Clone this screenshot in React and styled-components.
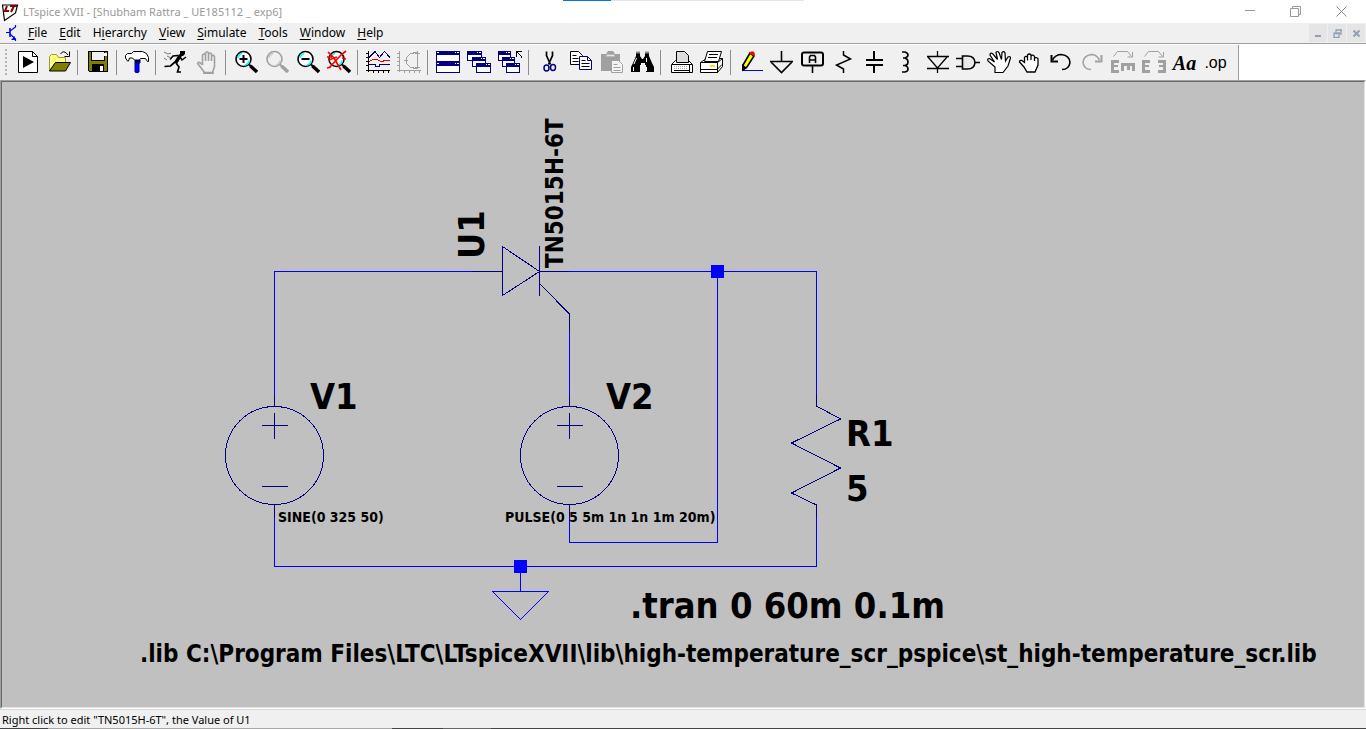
import React from "react";
import styled, { createGlobalStyle } from "styled-components";

const GlobalStyle = createGlobalStyle`
  * { box-sizing: border-box; }
  body { margin: 0; background: #f0f0f0; }
  button { font: inherit; color: inherit; }
`;

const uiFont = `"Noto Sans", "Open Sans", sans-serif`;
const schematicFont = `"DejaVu Sans Condensed", "DejaVu Sans", sans-serif`;

const Window = styled.div`
  display: flex;
  flex-direction: column;
  min-height: 100vh;
  position: relative;
  font-family: ${uiFont};
  font-size: 12px;
  color: #000;
  background: #f0f0f0;
`;

const LoadBar = styled.div`
  position: absolute;
  top: 0;
  left: 563px;
  width: 241px;
  height: 1px;
  background: linear-gradient(to right, #0078d7 48px, #e5e5e5 48px);
`;

const TitleBar = styled.header`
  display: flex;
  align-items: center;
  height: 23px;
  padding-left: 1px;
  background: #fff;
  color: #999;
`;

const Title = styled.h1`
  flex: 1;
  margin: 0 0 0 4px;
  font-size: 11px;
  font-weight: 400;
  line-height: 22px;
  white-space: nowrap;
`;

const CaptionButton = styled.button`
  display: flex;
  align-items: center;
  justify-content: center;
  width: 46px;
  height: 22px;
  padding: 0;
  border: 0;
  background: transparent;
`;

const CaptionGroup = styled.div`
  display: flex;
  padding-right: 2px;
`;

const MenuBar = styled.nav`
  display: flex;
  align-items: center;
  height: 20px;
  padding: 0 1px 0 5px;
`;

const MenuList = styled.ul`
  display: flex;
  flex: 1;
  margin: 0 0 0 3px;
  padding: 0;
  list-style: none;
`;

const MenuButton = styled.button`
  padding: 0 6px;
  border: 0;
  background: transparent;
  font-size: 12px;
  line-height: 20px;
  u {
    text-underline-offset: 2px;
    text-decoration-skip-ink: none;
  }
`;

const ChildButtons = styled.div`
  display: flex;
  gap: 1px;
`;

const ChildButton = styled.button`
  display: flex;
  align-items: center;
  justify-content: center;
  width: 18px;
  height: 18px;
  padding: 0;
  border: 0;
  background: #e5e5e5;
`;

const ToolRow = styled.div`
  display: flex;
  border-top: 1px solid #a0a0a0;
  background: #fff;
`;

const Toolbar = styled.div`
  display: flex;
  align-items: center;
  height: 35px;
  margin-top: 1px;
  padding-right: 7px;
  border-right: 1px solid #a0a0a0;
  background: #f0f0f0;
`;

const Grip = styled.div`
  width: 2px;
  height: 28px;
  margin: 0 5px;
  background: repeating-linear-gradient(#b4b4b4 0 2px, #f0f0f0 2px 4px);
`;

const Separator = styled.div`
  width: 8px;
  height: 25px;
  padding-left: 3px;
  &::before {
    content: "";
    display: block;
    width: 1px;
    height: 25px;
    background: #8d8d8d;
  }
`;

const ToolButton = styled.button`
  display: flex;
  align-items: center;
  justify-content: center;
  width: 31px;
  height: 35px;
  padding: 0;
  border: 0;
  background: transparent;
  svg { display: block; }
`;

const TextGlyph = styled.span`
  font-family: ${(p) => (p.$serif ? `"Liberation Serif", serif` : `"Liberation Sans", sans-serif`)};
  font-size: ${(p) => (p.$serif ? 20 : 16)}px;
  font-style: ${(p) => (p.$serif ? "italic" : "normal")};
  font-weight: ${(p) => (p.$serif ? 700 : 400)};
  line-height: 24px;
`;

const Canvas = styled.main`
  display: flex;
  flex: 1;
  min-height: 560px;
  border-style: solid;
  border-width: 1px;
  border-color: #a0a0a0 #fff #fff #a0a0a0;
  background: #c0c0c0;
`;

const CanvasInner = styled.div`
  display: flex;
  flex: 1;
  border-style: solid;
  border-width: 1px;
  border-color: #696969 #e3e3e3 #e3e3e3 #696969;
`;

const Schematic = styled.svg`
  flex: 1;
  display: block;
  min-width: 0;
  overflow: hidden;
  .wire { fill: none; stroke: #0000ff; }
  .part { fill: none; stroke: #000080; }
  .node { fill: #0000ff; }
`;

const Label = styled.text`
  font-family: ${schematicFont};
  font-weight: 700;
  font-size: ${(p) => p.$size}px;
  fill: #000;
`;

const StatusBar = styled.footer`
  border-top: 1px solid #d7d7d7;
  padding: 0 2px;
  font-size: 11px;
  line-height: 19px;
  height: 19px;
`;

const TaskbarEdge = styled.div`
  height: 1px;
  background: linear-gradient(
    to right,
    #444 48px, #a8a8a8 48px, #a8a8a8 392px, #444 392px, #444 443px,
    #666 443px, #666 491px, #444 491px
  );
`;

const K = "#000";
const G = "#a0a0a0";
const N = "#000080";

const Icon = ({ crisp, children }) => (
  <svg width="25" height="25" viewBox="0 0 25 25" fill="none" stroke={K}
    shapeRendering={crisp ? "crispEdges" : "auto"} aria-hidden="true">
    {children}
  </svg>
);

const Lens = ({ color = K, tint = "#0ff", body = "#fff" }) => (
  <>
    <circle cx="10.5" cy="9" r="7.5" fill={body} stroke={color} strokeWidth="1.6" />
    <path d="M5 8q1-4 4-4.500M12 15q4-1 4-4.500" stroke={tint} strokeWidth="1.600" />
    <path d="M16 14.500l2 2" stroke={color} strokeWidth="2" />
    <path d="M17.500 16l6.500 6" stroke={color} strokeWidth="3.400" />
  </>
);

const MiniWindow = ({ x, y, w, h, t = 4, wide }) => (
  <>
    <rect x={x + 0.5} y={y + 0.5} width={w - 1} height={h - 1} fill="#fff" stroke={N} />
    <rect x={x} y={y} width={w} height={t} fill={N} stroke="none" />
    {wide && <path d={`M${x + 1} ${y + 1.5}h2`} stroke="#fff" />}
    <path d={`M${x + w - 5} ${y + 1.5}h1M${x + w - 3} ${y + 1.5}h2`} stroke="#fff" />
  </>
);

const TurnArrow = () => <path d="M3.500 6.500l4-5h10l4 5M22.500 2v5h-5" stroke={G} />;
const letterE = "M1 10h8v3h-5v2h4v2h-4v3h5v3h-8z";

const icons = {
  run: (
    <Icon>
      <path d="M3.500 1.500h14l5 5v16h-19z" fill="#fff" />
      <path d="M17.500 1.500v5h5" />
      <path d="M8 6l11 6-11 6z" fill={K} stroke="none" />
    </Icon>
  ),
  open: (
    <Icon>
      <path d="M3.500 20.500v-14l2-2h5l2 3h7v5h-10z" fill="#ffff80" stroke="#9a9a30" />
      <path d="M9.500 12.500h15l-5 8.500h-16z" fill="#808000" />
      <path d="M14.500 4q3-5 7.500 1M23.500 1.500v5h-5" />
    </Icon>
  ),
  save: (
    <Icon crisp>
      <path d="M3.500 1.500h19v20h-18l-1-1z" fill="#808000" />
      <path d="M6.500 1.500h13v9h-13z" fill="#f0f0f0" />
      <path d="M19 3h3v3h-3z" fill="#fff" stroke="none" />
      <path d="M7 14h12v7h-12z" fill={K} stroke="none" />
      <path d="M15 16h3v5h-3z" fill="#fff" stroke="none" />
    </Icon>
  ),
  hammer: (
    <Icon>
      <path d="M11 10h5v3h-1v9q-2 1.500-4 0z" fill="#0000ff" stroke="#0000a0" />
      <path d="M11 10.500h5M11.500 12.500h3" strokeWidth="1.500" />
      <path d="M1.500 5.500l2-2h4l2-2h9l4 2 2 4v4h-1l-2-3h-5l-1 1.500h-5l-2-2h-3l-1 3h-1l-2-3z" fill="#fff" />
    </Icon>
  ),
  runner: (
    <Icon>
      <path d="M17 1h5v3l-2 2h-3z" fill={K} stroke="none" />
      <path d="M17.500 5l-5 8" strokeWidth="3.400" />
      <path d="M15 5.500l-5 .5-3 3.500M17 7l2 3 4-3" strokeWidth="1.500" />
      <path d="M12 12l-4.500 4-6 .500M13 13l3 4-1.500 5h3.500" strokeWidth="1.700" />
      <path d="M1 2l4 2 3-1M4 6l4 2M1 8l3 2" stroke="#777" />
    </Icon>
  ),
  halt: (
    <Icon>
      <path d="M8.500 15v-10q1.500-2 3 0v-2q1.500-2.500 3 0v1q1.500-2 3 0v2q2-1.500 3 .5v10l-2 6h-8l-3-4-4-5q1-2 3-.5l2 2M11.500 5v6M14.500 4v7M17.500 5v6M9 23.200h11" stroke={G} strokeWidth="1.600" />
    </Icon>
  ),
  zoomIn: <Icon><Lens /><path d="M10.500 5v8M6.500 9h8" strokeWidth="2" /></Icon>,
  zoomArea: <Icon><Lens color={G} tint="#c8c8c8" body="#f0f0f0" /></Icon>,
  zoomOut: <Icon><Lens /><path d="M6.500 9h8" strokeWidth="2" /></Icon>,
  zoomFit: (
    <Icon>
      <Lens />
      <path d="M2 2l6 6 7 12M20 1l-5 4-12 13M1 7h5M3 10l8-3M16 8l4 1M1 18l4-1" stroke="#f00" strokeWidth="1.700" />
    </Icon>
  ),
  plot: (
    <Icon crisp>
      <path d="M3.500 1v21M1 20.500h24M1 3.500h2M1 7.500h2M1 11.500h2M1 15.500h2M8.500 20v3M13.500 20v3M18.500 20v3M23.500 20v3" />
      <path d="M4 7.500l6-6 4.500 6 5-6 5.500 6" stroke={N} />
      <path d="M4 11.500l4-2h4l5 2.500 3-2h5" stroke="#f00" />
      <path d="M4 14.500h6v2h4v-2h11" stroke={N} />
    </Icon>
  ),
  polar: (
    <Icon crisp>
      <path d="M3.500 1v21M1 20.500h24M1 3.500h2M1 7.500h2M1 11.500h2M1 15.500h2M8.500 20v3M13.500 20v3M18.500 20v3M23.500 20v3M21.500 1v18M19 3.500h5M19 17.500h5M21 2l-7 2-4 4v5l4 4 7 2M8 10.500h4" stroke={G} />
    </Icon>
  ),
  tile: (
    <Icon crisp>
      <MiniWindow wide x={1} y={1} w={24} h={11} />
      <MiniWindow wide x={1} y={12} w={24} h={11} />
    </Icon>
  ),
  cascade: (
    <Icon crisp>
      <MiniWindow x={1} y={1} w={15} h={10} />
      <MiniWindow x={6} y={7} w={14} h={10} />
      <MiniWindow x={10} y={13} w={15} h={10} />
    </Icon>
  ),
  closeAll: (
    <Icon crisp>
      <MiniWindow x={1} y={1} w={13} h={10} />
      <MiniWindow x={5} y={7} w={13} h={10} />
      <MiniWindow x={9} y={13} w={14} h={10} />
      <path d="M19.500 7v-5.500h5M19 1l5 5v2" />
    </Icon>
  ),
  cut: (
    <Icon>
      <path d="M10.500 1.500v4l4 9M16.500 1.500v4l-4 9" strokeWidth="1.700" />
      <ellipse cx="10.500" cy="18" rx="2.500" ry="3" stroke={N} strokeWidth="1.500" />
      <ellipse cx="17" cy="17.500" rx="2.500" ry="3" stroke={N} strokeWidth="1.500" />
    </Icon>
  ),
  copy: (
    <Icon>
      <path d="M3.500 1.500h8l4 4v9h-12z" fill="#fff" />
      <path d="M5.500 5.500h4M5.500 8.500h6M5.500 11.500h6" />
      <path d="M12.500 6.500h8l4 4v9h-12z" fill="#fff" stroke={N} />
      <path d="M20.500 6.500v4h4" stroke={N} />
      <path d="M14.500 10.500h4M14.500 13.500h8M14.500 16.500h8" />
    </Icon>
  ),
  paste: (
    <Icon>
      <path d="M3 4h5l2-3h5l2 3h5v7h-8v10h-11z" fill={G} stroke="none" />
      <path d="M8.500 6.500v-2h8v2z" fill="#e8e8e8" stroke="#b8b8b8" />
      <path d="M13.500 10.500h7l4 4v8h-11z" fill="#f4f4f4" stroke={G} />
      <path d="M15.500 14.500h4M15.500 17.500h7M15.500 20.500h7" stroke={G} />
    </Icon>
  ),
  find: (
    <Icon>
      <path d="M7 2h4v4l2 3h1l2-3v-4h4v4l3 7 2 4v5h-8v-7h-1v-2h-4v2h-1v7h-9v-5l2-4 3-7z" fill={K} stroke="none" />
      <path d="M7 2.500h4M16 2.500h4" stroke="#888" strokeWidth="2" />
      <path d="M7.500 8l-2.500 6M17.500 8v4M4.500 17v4M17.500 17v4" stroke="#fff" />
    </Icon>
  ),
  print: (
    <Icon>
      <path d="M3.500 14.500l4-4h13l4 4v8h-21z" fill="#fff" />
      <path d="M8.500 12.500v-11h8l4 4v7z" fill="#ddd" />
      <path d="M4 14.500h20M6 20.500h15M21.500 15v7" />
      <path d="M6 16.500h14M6 18.500h14" stroke="#aaa" strokeDasharray="1 1" />
    </Icon>
  ),
  printSetup: (
    <Icon>
      <path d="M1.500 12.500l6-4h16v8l-5 6h-17z" fill="#fff" />
      <path d="M5.500 11.500l3-10h14l-3 10z" fill="#fff" />
      <path d="M1.500 12.500h17l5-4M18.500 12.500v10M2 19.500h16l5-5M10 4.500h9M9 7.500h9" />
      <path d="M11 16h5" stroke="#e8e800" strokeWidth="2" />
    </Icon>
  ),
  wire: (
    <Icon>
      <path d="M4 20.500h21" stroke="#00f" />
      <path d="M12 3l4 3-7 11-4 3v-5z" fill="#ff0" strokeWidth="1.600" />
      <path d="M12 2q4-2 5 2l-1 2-5-3z" fill="#f00" stroke="none" />
      <path d="M4 14l5 4-5 3z" fill={K} stroke="none" />
    </Icon>
  ),
  ground: (
    <Icon>
      <path d="M12.500 1v10M1 11.500h23" strokeWidth="1.600" />
      <path d="M2 12l10.500 10.500 10.500-10.500" strokeWidth="1.600" />
    </Icon>
  ),
  netLabel: (
    <Icon>
      <rect x="2" y="2.500" width="21" height="13" rx="2" strokeWidth="2" fill="#f0f0f0" />
      <path d="M12.500 16v7" strokeWidth="1.600" />
      <path d="M9.500 13v-6l1-1.500h4l1 1.500v6M9.500 10h6" strokeWidth="1.600" />
    </Icon>
  ),
  resistor: <Icon><path d="M12.500 1v4l7 4-14 6 7 4v4" strokeWidth="1.500" /></Icon>,
  capacitor: (
    <Icon crisp>
      <path d="M12 1v8M12 16v7" strokeWidth="2" />
      <path d="M4 10h17M4 15h17" strokeWidth="2" />
    </Icon>
  ),
  inductor: (
    <Icon>
      <path d="M9 2h3q3 1 3 3t-3 3h-2M12 8q3 1 3 4t-3 3.500h-2M12 15.500q3 1 3 3.500t-3 3h-3" strokeWidth="1.600" />
    </Icon>
  ),
  diode: <Icon><path d="M13.500 1v5M3 6.500h22M4 7l9.500 11 9.500-11M3 18.500h22M13.500 18v5" strokeWidth="1.300" /></Icon>,
  gate: (
    <Icon>
      <path d="M7.500 6h5q7 0 7.500 6.500-.5 6.500-7.500 6.500h-5z" fill="#e8e8e8" strokeWidth="1.600" />
      <path d="M1 8.500h6M1 16.500h6M20 12.500h5" strokeWidth="1.600" />
    </Icon>
  ),
  move: (
    <Icon>
      <path d="M9 17l-7-6q-1-2.500 1.500-2.500l5 3.500-4.500-7q0-2.500 2.500-1.500l5 6-1.500-7q1-2 3 0l2.500 7 .5-7q2-2 3 .5l.5 8 2.500-4q2.500-1 2.500 1l-2.500 8-5 6.500h-8z" fill="#fff" strokeWidth="1.200" />
    </Icon>
  ),
  drag: (
    <Icon>
      <path d="M7 17l-4.500-5q0-2 2.500-1.500l2.500 2v-5q1-2 3-.5v-2q2-2 3.500 0v1q2-2 3.500.5v1.500q3-1 3.500 1v6l-3 7h-8zM10.500 6.500v4M14 6v4M17.500 8v3" fill="#fff" strokeWidth="1.300" />
    </Icon>
  ),
  undo: (
    <Icon>
      <path d="M4.500 10q3-5.500 9-5.500 8 1 8.500 8-1 7-8 7" strokeWidth="1.600" />
      <path d="M3.500 5v6.500h6.500" strokeWidth="2" />
    </Icon>
  ),
  redo: (
    <Icon>
      <path d="M20.500 10q-3-5.500-8-5.500-8 1-8.500 8 1 7 8 7" stroke={G} strokeWidth="1.600" />
      <path d="M22.500 5v6.500h-6.500" stroke={G} strokeWidth="2" />
    </Icon>
  ),
  rotate: (
    <Icon>
      <TurnArrow />
      <path d={letterE} fill={G} stroke="none" />
      <path d="M11 13h14v8h-3v-5h-2v4h-3v-4h-3v5h-3z" fill={G} stroke="none" />
    </Icon>
  ),
  mirror: (
    <Icon>
      <TurnArrow />
      <path d={letterE} fill={G} stroke="none" />
      <path d="M25 10h-8v3h5v2h-4v2h4v3h-5v3h8z" fill={G} stroke="none" />
    </Icon>
  ),
  text: <TextGlyph $serif>Aa</TextGlyph>,
  directive: <TextGlyph>.op</TextGlyph>,
};

const toolGroups = [
  [["run", "Run"], ["open", "Open"]],
  [["save", "Save"]],
  [["hammer", "Control Panel"]],
  [["runner", "Run simulation"], ["halt", "Halt"]],
  [["zoomIn", "Zoom in"], ["zoomArea", "Pan"], ["zoomOut", "Zoom out"], ["zoomFit", "Zoom to fit"]],
  [["plot", "Autorange"], ["polar", "Plot settings"]],
  [["tile", "Tile windows"], ["cascade", "Cascade windows"], ["closeAll", "Close all windows"]],
  [["cut", "Cut"], ["copy", "Copy"], ["paste", "Paste"], ["find", "Find"]],
  [["print", "Print"], ["printSetup", "Print setup"]],
  [
    ["wire", "Wire"], ["ground", "Ground"], ["netLabel", "Label net"], ["resistor", "Resistor"],
    ["capacitor", "Capacitor"], ["inductor", "Inductor"], ["diode", "Diode"], ["gate", "Component"],
    ["move", "Move"], ["drag", "Drag"], ["undo", "Undo"], ["redo", "Redo"],
    ["rotate", "Rotate"], ["mirror", "Mirror"], ["text", "Text"], ["directive", "SPICE directive"],
  ],
];

const menus = [
  ["", "F", "ile"], ["", "E", "dit"], ["H", "i", "erarchy"], ["", "V", "iew"],
  ["", "S", "imulate"], ["", "T", "ools"], ["", "W", "indow"], ["", "H", "elp"],
];

const VoltageSource = ({ x, y }) => (
  <g className="part">
    <circle cx={x} cy={y} r="49" />
    <path d={`M${x - 13} ${y - 30}h26M${x} ${y - 43}v26M${x - 13} ${y + 31}h26M${x} ${y - 49}v-12M${x} ${y + 49}v12`} />
  </g>
);

export default function App() {
  return (
    <>
      <GlobalStyle />
      <Window>
        <TitleBar>
          <svg width="18" height="20" viewBox="0 0 18 20" aria-hidden="true">
            <path d="M1.500 3h15l-2 8-11 7.500z" fill="#fff" stroke="#000" strokeWidth="1.200" />
            <path d="M6 4l-2 5h4M9 4h7M13 4l-3 6" fill="none" stroke="#8b0000" strokeWidth="2" />
          </svg>
          <Title>LTspice XVII - [Shubham Rattra _ UE185112 _ exp6]</Title>
          <CaptionGroup>
            <CaptionButton aria-label="Minimize">
              <svg width="11" height="11" fill="none" stroke="#999"><path d="M1 4.500h10" /></svg>
            </CaptionButton>
            <CaptionButton aria-label="Restore">
              <svg width="11" height="11" fill="none" stroke="#999"><path d="M.5 2.500h8v8h-8zM2.500 2v-1.500h8v8h-2" /></svg>
            </CaptionButton>
            <CaptionButton aria-label="Close">
              <svg width="11" height="11" fill="none" stroke="#888"><path d="M.5 .5l10 10M10.500 .5l-10 10" /></svg>
            </CaptionButton>
          </CaptionGroup>
        </TitleBar>
        <LoadBar />

        <MenuBar>
          <svg width="14" height="18" viewBox="0 0 14 18" fill="none" stroke="#00f" aria-hidden="true">
            <path d="M1 8.500h4M10.500 1v2l-5.500 4M5 10l5.500 5v2" strokeWidth="1.200" />
            <path d="M5 4v9" strokeWidth="1.600" />
            <path d="M10 12v4h-4z" fill="#00f" stroke="none" />
          </svg>
          <MenuList>
            {menus.map(([pre, key, post]) => (
              <li key={pre + key + post}>
                <MenuButton>{pre}<u>{key}</u>{post}</MenuButton>
              </li>
            ))}
          </MenuList>
          <ChildButtons>
            <ChildButton aria-label="Minimize schematic">
              <svg width="9" height="9"><path d="M1 7h6" stroke="#8fa0b4" strokeWidth="2" /></svg>
            </ChildButton>
            <ChildButton aria-label="Restore schematic">
              <svg width="9" height="9" fill="none" stroke="#8fa0b4"><path d="M1 4.500h5v4h-5zM1 4h6M3 3v-2h5v4h-1M3 1h6" strokeWidth="1.300" /></svg>
            </ChildButton>
            <ChildButton aria-label="Close schematic">
              <svg width="9" height="9"><path d="M1.500 1.500l6 6M7.500 1.500l-6 6" stroke="#8fa0b4" strokeWidth="2" /></svg>
            </ChildButton>
          </ChildButtons>
        </MenuBar>

        <ToolRow>
          <Toolbar role="toolbar" aria-label="Tools">
            <Grip />
            {toolGroups.map((group, i) => (
              <React.Fragment key={group[0][0]}>
                {i > 0 && <Separator />}
                {group.map(([id, label]) => (
                  <ToolButton key={id} aria-label={label}>{icons[id]}</ToolButton>
                ))}
              </React.Fragment>
            ))}
          </Toolbar>
        </ToolRow>

        <Canvas>
          <CanvasInner>
            <Schematic role="img" aria-label="Schematic">
              <g transform="translate(-2 -82)">
                <g shapeRendering="crispEdges">
                  <path className="wire" d="M274.500 406V271.500H502M540 271.500H816.500V406M717.500 271V542.500H569.500V505M569.500 406V314M274.500 505V566.500H816.500V505M520.500 566V591M492.500 591.500H548.500L520.500 619.500z" />
                  <VoltageSource x={274.5} y={455.5} />
                  <VoltageSource x={569.5} y={455.5} />
                  <path className="part" d="M472 271.500H502.500M502.500 246.500V295.500L539.500 271.500zM539.500 246V296M540 271.500H569M540 284L569.500 314V332" />
                  <path className="part" d="M816.500 394V406L840.500 419L791.500 443L840.500 468L791.500 493L816.500 505V517" />
                  <rect className="node" x="711" y="265" width="13" height="13" />
                  <rect className="node" x="514" y="560" width="13" height="13" />
                </g>
                <Label $size={36} transform="translate(484 259) rotate(-90)">U1</Label>
                <Label $size={24} transform="translate(563 268) rotate(-90)">TN5015H-6T</Label>
                <Label $size={36} x="310" y="409">V1</Label>
                <Label $size={36} x="606" y="409">V2</Label>
                <Label $size={36} x="846" y="446">R1</Label>
                <Label $size={36} x="846" y="501">5</Label>
                <Label $size={14} x="278" y="522">SINE(0 325 50)</Label>
                <Label $size={14} x="505" y="522">PULSE(0 5 5m 1n 1n 1m 20m)</Label>
                <Label $size={36} x="630" y="618">.tran 0 60m 0.1m</Label>
                <Label $size={24} x="140" y="662">
                  .lib C:\Program Files\LTC\LTspiceXVII\lib\high-temperature_scr_pspice\st_high-temperature_scr.lib
                </Label>
              </g>
            </Schematic>
          </CanvasInner>
        </Canvas>

        <StatusBar>Right click to edit "TN5015H-6T", the Value of U1</StatusBar>
        <TaskbarEdge />
      </Window>
    </>
  );
}
